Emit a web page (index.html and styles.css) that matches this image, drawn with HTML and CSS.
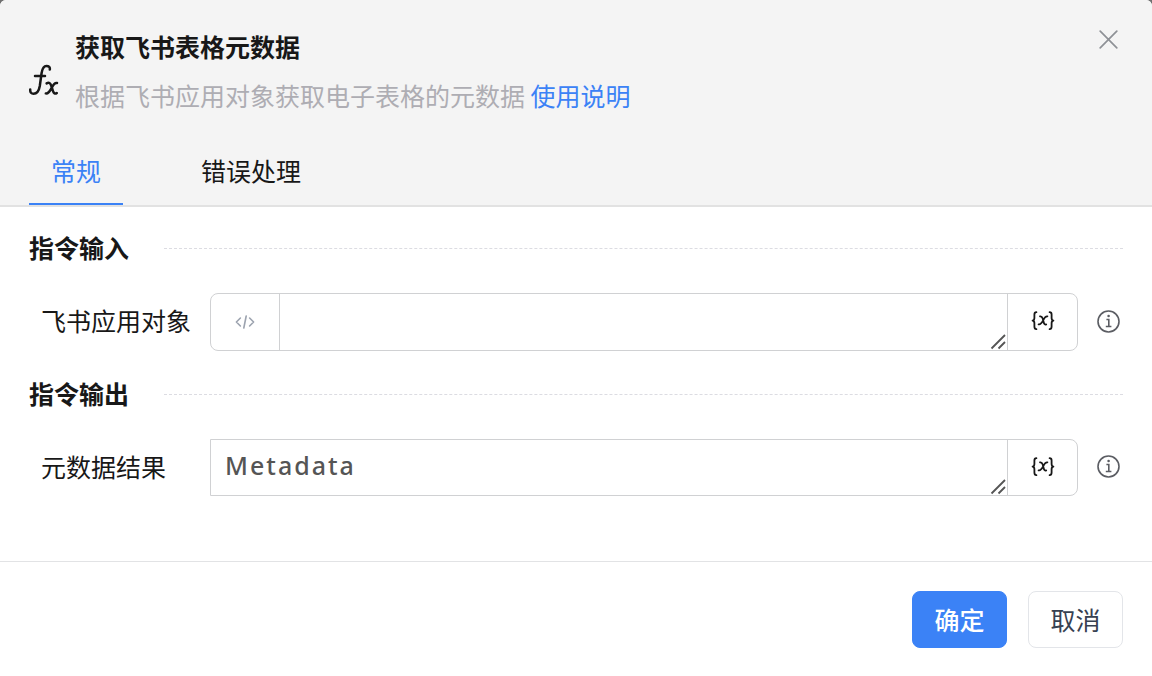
FILE: index.html
```html
<!DOCTYPE html>
<html lang="zh-CN">
<head>
<meta charset="utf-8">
<meta name="viewport" content="width=device-width, initial-scale=1">
<title>获取飞书表格元数据</title>
<link rel="stylesheet" href="styles.css">
</head>
<body>
<form class="dialog">
  <header class="header">
    <div class="intro">
      <svg class="intro-icon" viewBox="0 0 30 32" fill="none" stroke="#181818" stroke-width="2.5" stroke-linecap="round" stroke-linejoin="round" aria-hidden="true">
        <path d="M1.2 25.4C1 28.6 2.4 29.8 4.6 29.8C8.6 29.8 10 26.5 10.8 22L12.6 9C13.4 4.4 14.8 2 17.4 2C20 2 21.2 3.2 20.8 5.6"/>
        <path d="M6 12H16"/>
        <path d="M17.6 19.4C20 18 21.4 19 22.2 21.6L23.6 26C24.4 29 26 30.4 27.8 29M28 19C25.8 18.4 24.2 20.8 22.8 23.6C21.2 26.8 19.6 30 16.8 29.4"/>
      </svg>
      <div class="intro-text">
        <h1 class="title">获取飞书表格元数据</h1>
        <p class="summary">根据飞书应用对象获取电子表格的元数据 <a class="link" href="#">使用说明</a></p>
      </div>
      <button class="close" type="button" aria-label="关闭">
        <svg width="19" height="19" viewBox="0 0 19 19" stroke="#8e9196" stroke-width="1.7" stroke-linecap="round"><path d="M1.2 1.2L17.8 17.8M17.8 1.2L1.2 17.8"/></svg>
      </button>
    </div>
    <nav class="tabs" role="tablist">
      <button class="tab tab-active" type="button" role="tab" aria-selected="true">常规</button>
      <button class="tab" type="button" role="tab" aria-selected="false">错误处理</button>
    </nav>
  </header>

  <main class="content">
    <section class="section">
      <h2 class="section-title">指令输入</h2>
      <div class="row">
        <label class="label" for="app">飞书应用对象</label>
        <div class="group">
          <button class="cell cell-code" type="button" aria-label="代码模式">
            <svg width="20" height="14" viewBox="0 0 20 14" fill="none" stroke="#9ca3af" stroke-width="1.6" stroke-linecap="round" stroke-linejoin="round"><path d="M5.4 3L1.4 7L5.4 11M14.6 3L18.6 7L14.6 11M11.2 1L8.8 13"/></svg>
          </button>
          <div class="field">
            <textarea class="input" id="app" rows="1"></textarea>
            <svg class="grip" width="16" height="16" viewBox="0 0 16 16" stroke="#555" stroke-width="1.8"><path d="M1.5 14.5L15 1M8.5 14.5L15 8"/></svg>
          </div>
          <button class="cell" type="button" aria-label="选择变量">
            <svg width="24" height="20" viewBox="0 0 24 20" fill="none" stroke="#181818" stroke-width="1.8" stroke-linecap="round" stroke-linejoin="round"><path d="M5.4 1.2C3.8 1.2 3.4 2 3.4 3.6V7C3.4 8.6 2.8 9.4 1.6 9.6C2.8 9.8 3.4 10.6 3.4 12.2V15.6C3.4 17.4 3.8 18.2 5.4 18.2M18.6 1.2C20.2 1.2 20.6 2 20.6 3.6V7C20.6 8.6 21.2 9.4 22.4 9.6C21.2 9.8 20.6 10.6 20.6 12.2V15.6C20.6 17.4 20.2 18.2 18.6 18.2"/><path d="M9 5.4C10.8 5 11.2 6 11.7 7.6L12.7 11.2C13.1 13 14 14 15.2 13.4M16.4 5.4C14.4 5 13.2 7.2 12.2 9.2C11 11.6 9.8 14 7.6 13.4"/></svg>
          </button>
        </div>
        <button class="info" type="button" aria-label="说明">
          <svg width="23" height="23" viewBox="0 0 23 23" fill="none" stroke="#5b5d63" stroke-width="1.6"><circle cx="11.5" cy="11.5" r="10.5"/><circle cx="11.6" cy="6" r="1.3" fill="#5b5d63" stroke="none"/><path d="M9.4 9.5H11.8V16.5M8.8 16.5H14.4"/></svg>
        </button>
      </div>
    </section>

    <section class="section">
      <h2 class="section-title">指令输出</h2>
      <div class="row">
        <label class="label" for="result">元数据结果</label>
        <div class="group group-output">
          <div class="field">
            <textarea class="input" id="result" rows="1">Metadata</textarea>
            <svg class="grip" width="16" height="16" viewBox="0 0 16 16" stroke="#555" stroke-width="1.8"><path d="M1.5 14.5L15 1M8.5 14.5L15 8"/></svg>
          </div>
          <button class="cell" type="button" aria-label="选择变量">
            <svg width="24" height="20" viewBox="0 0 24 20" fill="none" stroke="#181818" stroke-width="1.8" stroke-linecap="round" stroke-linejoin="round"><path d="M5.4 1.2C3.8 1.2 3.4 2 3.4 3.6V7C3.4 8.6 2.8 9.4 1.6 9.6C2.8 9.8 3.4 10.6 3.4 12.2V15.6C3.4 17.4 3.8 18.2 5.4 18.2M18.6 1.2C20.2 1.2 20.6 2 20.6 3.6V7C20.6 8.6 21.2 9.4 22.4 9.6C21.2 9.8 20.6 10.6 20.6 12.2V15.6C20.6 17.4 20.2 18.2 18.6 18.2"/><path d="M9 5.4C10.8 5 11.2 6 11.7 7.6L12.7 11.2C13.1 13 14 14 15.2 13.4M16.4 5.4C14.4 5 13.2 7.2 12.2 9.2C11 11.6 9.8 14 7.6 13.4"/></svg>
          </button>
        </div>
        <button class="info" type="button" aria-label="说明">
          <svg width="23" height="23" viewBox="0 0 23 23" fill="none" stroke="#5b5d63" stroke-width="1.6"><circle cx="11.5" cy="11.5" r="10.5"/><circle cx="11.6" cy="6" r="1.3" fill="#5b5d63" stroke="none"/><path d="M9.4 9.5H11.8V16.5M8.8 16.5H14.4"/></svg>
        </button>
      </div>
    </section>
  </main>

  <footer class="footer">
    <button class="button button-primary" type="button">确定</button>
    <button class="button" type="button">取消</button>
  </footer>
</form>
</body>
</html>
```

FILE: styles.css
```css
* {
  box-sizing: border-box;
}

body {
  margin: 0;
  background: #707070;
  color: #181818;
  font-family: "Noto Sans CJK SC", sans-serif;
  font-size: 25px;
  line-height: 36px;
}

button,
textarea {
  margin: 0;
  padding: 0;
  border: 0;
  background: none;
  color: inherit;
  font: inherit;
}

svg {
  display: block;
}

.dialog {
  display: flex;
  flex-direction: column;
  min-height: 100vh;
  border-radius: 6px 6px 0 0;
  background: #fff;
  overflow: hidden;
}

.header {
  padding: 28px 29px 0;
  border-bottom: 2px solid #e2e2e2;
  background: #f4f4f4;
}

.intro {
  display: flex;
  align-items: center;
  gap: 16px;
}

.intro-icon {
  width: 30px;
  height: 50px;
  padding-top: 18px;
}

.intro-text {
  flex: 1;
}

.title,
.summary,
.section-title {
  margin: 0;
  font-size: 25px;
}

.title {
  font-weight: 700;
}

.summary {
  margin-top: 13px;
  color: #aeadb3;
}

.link {
  color: #3b82f6;
  text-decoration: none;
}

.close {
  align-self: flex-start;
  padding: 2px 5px;
}

.tabs {
  display: flex;
  gap: 56px;
  margin-top: 24px;
}

.tab {
  padding: 15px 22px;
  border-bottom: 2px solid transparent;
}

.tab-active {
  border-color: #3b82f6;
  color: #3b82f6;
}

.content {
  display: flex;
  flex: 1;
  flex-direction: column;
  gap: 24px;
  padding: 22px 29px 40px;
}

.section {
  display: flex;
  flex-direction: column;
  gap: 28px;
}

.section-title {
  display: flex;
  align-items: center;
  gap: 35px;
}

.section-title::after {
  content: "";
  flex: 1;
  margin-top: 2px;
  border-top: 1px dashed #dcdce2;
}

.row {
  display: grid;
  grid-template-columns: 169px 1fr 23px;
  align-items: center;
  padding: 0 3px 0 12px;
}

.label {
  padding-bottom: 4px;
}

.group {
  display: flex;
  height: 58px;
  margin-right: 19px;
  border: 1px solid #d0d1d3;
  border-radius: 8px;
}

.group-output {
  height: 57px;
  border-radius: 0 8px 8px 0;
}

.field {
  position: relative;
  display: flex;
  flex: 1;
}

.input {
  flex: 1;
  min-width: 0;
  padding: 7px 14px;
  outline: 0;
  color: #555;
  font-family: "Noto Sans", "Noto Sans CJK SC", sans-serif;
  font-weight: 500;
  letter-spacing: 2px;
  resize: none;
  overflow: hidden;
}

.grip {
  position: absolute;
  right: 1px;
  bottom: 0;
  pointer-events: none;
}

.cell {
  display: grid;
  place-items: center;
  width: 70px;
  padding-bottom: 2px;
  border-left: 1px solid #d0d1d3;
}

.cell-code {
  width: 69px;
  padding: 0;
  border-right: 1px solid #d0d1d3;
  border-left: 0;
}

.info {
  padding-bottom: 2px;
}

.footer {
  display: flex;
  justify-content: flex-end;
  gap: 21px;
  padding: 29px 29px 28px;
  border-top: 1px solid #e2e3e5;
}

.button {
  min-width: 95px;
  height: 57px;
  padding: 0 20px 2px;
  border: 1px solid #e3e5e9;
  border-radius: 8px;
  color: #374151;
}

.button-primary {
  border-color: #3b82f6;
  background: #3b82f6;
  color: #fff;
  font-weight: 500;
}
```
